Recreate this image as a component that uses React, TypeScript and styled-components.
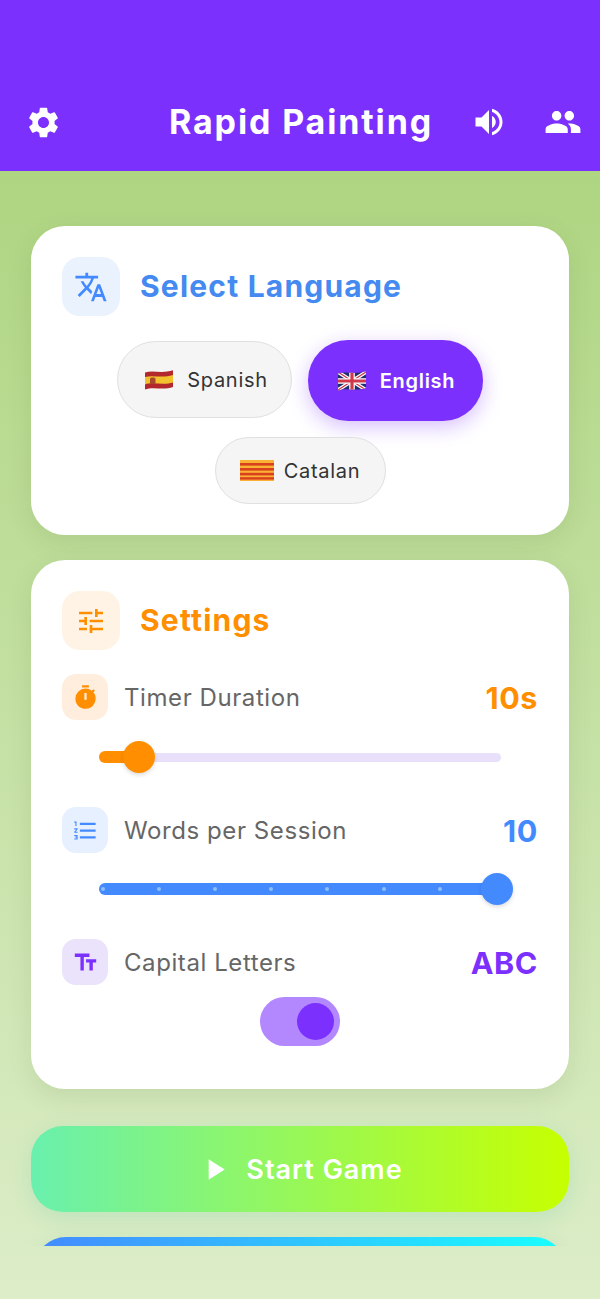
import React from "react";
import styled, { createGlobalStyle } from "styled-components";
import {
  MdSettings, MdVolumeUp, MdPeople, MdTranslate, MdTune, MdTimer,
  MdFormatListNumbered, MdTextFields, MdPlayArrow,
} from "react-icons/md";

const Global = createGlobalStyle`
  html, body { margin: 0; padding: 0; background: #DCEDC8; }
  * { box-sizing: border-box; }
  body { font-family: Inter, "Liberation Sans", sans-serif; }
`;

const Page = styled.div`
  width: 600px; height: 1299px; display: flex; flex-direction: column; overflow: hidden;
  background: linear-gradient(180deg, #AED581 0%, #AED581 13%, #DCEDC8 100%);
`;
const Header = styled.header`
  height: 171px; flex: none; background: #7C30FD; color: #fff;
  display: grid; grid-template-columns: 1fr auto 1fr; align-items: center;
  padding: 73px 18px 0 20px;
`;
const HeaderLeft = styled.div`display: flex; justify-content: flex-start; padding-left: 5px;`;
const HeaderRight = styled.div`display: flex; justify-content: flex-end; gap: 37px; align-items: center;`;
const Title = styled.h1`
  margin: 0; font-size: 34px; line-height: 48px; font-weight: 700; letter-spacing: 1.85px; white-space: nowrap;
`;
const Scroll = styled.main`
  height: 1075px; flex: none; overflow: hidden; padding: 55px 31px 0;
  display: flex; flex-direction: column; gap: 25px;
`;
const Card = styled.section<{ $h: number }>`
  flex: none; height: ${p => p.$h}px; background: #fff; border-radius: 34px; padding: 31px;
  box-shadow: 0 8px 24px rgba(70, 100, 40, 0.12);
  display: flex; flex-direction: column;
`;
const CardHead = styled.div`display: flex; align-items: center; gap: 20px; height: 59px;`;
const BigIcon = styled.div<{ $bg: string; $c: string; $size: number }>`
  width: 58px; height: 59px; border-radius: 18px; background: ${p => p.$bg}; color: ${p => p.$c};
  display: flex; align-items: center; justify-content: center; font-size: ${p => p.$size}px;
`;
const CardTitle = styled.h2<{ $c: string }>`
  margin: 0 0 2px; font-size: 30px; font-weight: 700; letter-spacing: 1.2px; color: ${p => p.$c};
`;
const Chips = styled.div`
  display: flex; flex-wrap: wrap; justify-content: center; align-items: flex-start;
  column-gap: 16px; row-gap: 16px; margin-top: 24px;
`;
const Chip = styled.div<{ $active?: boolean; $w: number; $h: number; $gap: number; $top?: number; $pl?: number }>`
  width: ${p => p.$w}px; height: ${p => p.$h}px; border-radius: 40px; margin-top: ${p => p.$top ?? 0}px;
  padding-left: ${p => p.$pl ?? 0}px;
  display: flex; align-items: center; justify-content: center; gap: ${p => p.$gap}px;
  font-size: 20px; letter-spacing: 0.7px;
  font-weight: ${p => (p.$active ? 600 : 400)};
  color: ${p => (p.$active ? "#fff" : "#333")};
  background: ${p => (p.$active ? "#7C30FD" : "#F5F5F5")};
  border: ${p => (p.$active ? "none" : "1.5px solid #E0E0E0")};
  box-shadow: ${p => (p.$active ? "0 6px 20px rgba(124,48,253,0.3)" : "none")};
`;
const Flag = styled.svg`flex: none; display: block;`;

const Rows = styled.div`display: flex; flex-direction: column; margin-top: 24px;`;
const Row = styled.div`display: flex; align-items: center; height: 46px;`;
const SmallIcon = styled.div<{ $bg: string; $c: string }>`
  width: 46px; height: 46px; border-radius: 14px; background: ${p => p.$bg}; color: ${p => p.$c};
  display: flex; align-items: center; justify-content: center; font-size: 27px; flex: none;
`;
const Label = styled.span`
  margin-left: 16px; font-size: 24px; color: #666; letter-spacing: 0.58px; flex: 1;
`;
const Value = styled.span<{ $c: string }>`
  font-size: 30.5px; font-weight: 700; color: ${p => p.$c}; letter-spacing: 0.6px;
`;
const SliderWrap = styled.div<{ $before: number }>`
  position: relative; height: 12px; margin: ${p => p.$before}px 37px 44px 37px;
`;
const TrackBg = styled.div`
  position: absolute; left: 0; right: 0; top: 1.5px; height: 9px; border-radius: 5px; background: #E8E0FA;
`;
const TrackFill = styled.div<{ $c: string }>`
  position: absolute; left: 0; top: 0; height: 12px; border-radius: 6px; background: ${p => p.$c};
`;
const Thumb = styled.div<{ $c: string }>`
  position: absolute; top: -10px; width: 32px; height: 32px; margin-left: -16px; border-radius: 50%;
  background: ${p => p.$c}; box-shadow: 0 2px 4px rgba(0,0,0,0.14);
`;
const Tick = styled.div`
  position: absolute; top: 4px; width: 4px; height: 4px; margin-left: -2px; border-radius: 50%; background: #8FBDFF;
`;
const ToggleRow = styled.div`display: flex; justify-content: center; margin-top: 12px;`;
const Toggle = styled.div`
  width: 80px; height: 49px; border-radius: 25px; background: #B388FF; padding: 6px 6px 0 0;
  display: flex; justify-content: flex-end;
`;
const Knob = styled.div`width: 37px; height: 37px; border-radius: 50%; background: #7C30FD;`;
const BigButton = styled.div<{ $from: string; $to: string; $top?: number; $inset?: number }>`
  flex: none; height: 86px; border-radius: 32px;
  margin: ${p => p.$top ?? 0}px ${p => p.$inset ?? 0}px 0;
  background: linear-gradient(90deg, ${p => p.$from}, ${p => p.$to});
  box-shadow: 0 6px 20px rgba(90, 200, 170, 0.22);
  display: flex; align-items: center; justify-content: center; gap: 14px;
  color: #fff; font-size: 27px; font-weight: 600; letter-spacing: 1px;
`;

const wave = "M0 3.5C8 .8 17 5 28 1.2V18C18 21.5 8 17.2 0 20.5Z";

const Spain = () => (
  <Flag width="28" height="22" viewBox="0 0 28 22">
    <clipPath id="wave-es"><path d={wave} /></clipPath>
    <g clipPath="url(#wave-es)">
      <rect width="28" height="22" fill="#B3282D" />
      <path d="M0 8C8 5.6 17 9.6 28 6V13.4C18 16.6 8 12.4 0 15.4Z" fill="#F2C12E" />
      <rect x="5" y="8.5" width="5.5" height="6.5" rx="1.5" fill="#A8482A" />
    </g>
  </Flag>
);
const UK = () => (
  <Flag width="28" height="22" viewBox="0 0 28 22">
    <clipPath id="wave-uk"><path d={wave} /></clipPath>
    <g clipPath="url(#wave-uk)">
      <rect width="28" height="22" fill="#1F2F6B" />
      <path d="M0 2l28 18M28 2L0 20" stroke="#fff" strokeWidth="3.6" />
      <path d="M0 2l28 18M28 2L0 20" stroke="#D0394B" strokeWidth="1.3" />
      <path d="M14 0v22M0 11h28" stroke="#fff" strokeWidth="5.6" />
      <path d="M14 0v22M0 11h28" stroke="#D0394B" strokeWidth="3.2" />
    </g>
  </Flag>
);
const Catalonia = () => (
  <Flag width="34" height="21" viewBox="0 0 34 21">
    <rect width="34" height="21" fill="#F9B233" />
    <rect y="3" width="34" height="2.6" fill="#D9401E" />
    <rect y="8" width="34" height="2.6" fill="#D9401E" />
    <rect y="12.8" width="34" height="2.6" fill="#D9401E" />
    <rect y="17.2" width="34" height="2.4" fill="#D9401E" />
  </Flag>
);

const ticks = [4, 60, 116, 172, 228, 285, 341];

export default function App() {
  return (
    <Page>
      <Global />
      <Header>
        <HeaderLeft><MdSettings size={37} /></HeaderLeft>
        <Title>Rapid Painting</Title>
        <HeaderRight><MdVolumeUp size={36} /><MdPeople size={38} /></HeaderRight>
      </Header>
      <Scroll>
        <Card $h={309}>
          <CardHead>
            <BigIcon $bg="#EAF2FE" $c="#448AFF" $size={34}><MdTranslate /></BigIcon>
            <CardTitle $c="#448AF0">Select Language</CardTitle>
          </CardHead>
          <Chips>
            <Chip $w={175} $h={77} $gap={14} $top={1} $pl={4}><Spain />Spanish</Chip>
            <Chip $active $w={175} $h={81} $gap={14} $pl={2}><UK />English</Chip>
            <Chip $w={171} $h={67} $gap={10}><Catalonia />Catalan</Chip>
          </Chips>
        </Card>
        <Card $h={529}>
          <CardHead>
            <BigIcon $bg="#FFF3E5" $c="#FF8F00" $size={32}><MdTune /></BigIcon>
            <CardTitle $c="#FF8F00">Settings</CardTitle>
          </CardHead>
          <Rows>
            <Row>
              <SmallIcon $bg="#FFEEDD" $c="#FF8F00"><MdTimer /></SmallIcon>
              <Label>Timer Duration</Label>
              <Value $c="#FF8F00">10s</Value>
            </Row>
            <SliderWrap $before={31}>
              <TrackBg />
              <TrackFill $c="#FF8F00" style={{ width: 40 }} />
              <Thumb $c="#FF8F00" style={{ left: 40 }} />
            </SliderWrap>
            <Row>
              <SmallIcon $bg="#E6F0FF" $c="#448AFF"><MdFormatListNumbered /></SmallIcon>
              <Label>Words per Session</Label>
              <Value $c="#448AFF">10</Value>
            </Row>
            <SliderWrap $before={30}>
              <TrackFill $c="#448AFF" style={{ width: 398 }} />
              {ticks.map(t => <Tick key={t} style={{ left: t }} />)}
              <Thumb $c="#448AFF" style={{ left: 398 }} />
            </SliderWrap>
            <Row>
              <SmallIcon $bg="#EBE3FB" $c="#7C30FD"><MdTextFields /></SmallIcon>
              <Label>Capital Letters</Label>
              <Value $c="#7C30FD">ABC</Value>
            </Row>
            <ToggleRow><Toggle><Knob /></Toggle></ToggleRow>
          </Rows>
        </Card>
        <BigButton $from="#69F0AE" $to="#C6FF00" $top={12}><MdPlayArrow size={35} />Start Game</BigButton>
        <BigButton $from="#448AFF" $to="#18FFFF" $inset={3} />
      </Scroll>
    </Page>
  );
}
